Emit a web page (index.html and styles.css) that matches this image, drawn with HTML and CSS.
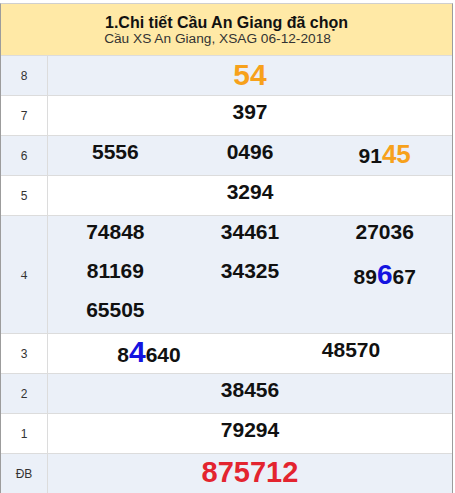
FILE: index.html
```html
<!DOCTYPE html>
<html lang="vi">
<head>
<meta charset="utf-8">
<title>Chi tiết Cầu An Giang</title>
<link rel="stylesheet" href="styles.css">
</head>
<body>
<div class="frame">
  <div class="head">
    <div class="title">1.Chi tiết Cầu An Giang đã chọn</div>
    <div class="sub">Cầu XS An Giang, XSAG 06-12-2018</div>
  </div>

  <div class="row alt">
    <div class="label">8</div>
    <div class="data cols1"><div class="col"><div class="num"><span class="orange big54">54</span></div></div></div>
  </div>

  <div class="row">
    <div class="label">7</div>
    <div class="data cols1"><div class="col"><div class="num">397</div></div></div>
  </div>

  <div class="row alt">
    <div class="label">6</div>
    <div class="data cols3">
      <div class="col"><div class="num">5556</div></div>
      <div class="col"><div class="num">0496</div></div>
      <div class="col"><div class="num">91<span class="orange big45">45</span></div></div>
    </div>
  </div>

  <div class="row">
    <div class="label">5</div>
    <div class="data cols1"><div class="col"><div class="num">3294</div></div></div>
  </div>

  <div class="row alt">
    <div class="label serif">4</div>
    <div class="data cols3">
      <div class="col">
        <div class="num">74848</div>
        <div class="num">81169</div>
        <div class="num">65505</div>
      </div>
      <div class="col">
        <div class="num">34461</div>
        <div class="num">34325</div>
      </div>
      <div class="col">
        <div class="num">27036</div>
        <div class="num">89<span class="blue big6">6</span>67</div>
      </div>
    </div>
  </div>

  <div class="row">
    <div class="label">3</div>
    <div class="data cols2">
      <div class="col"><div class="num">8<span class="blue big4">4</span>640</div></div>
      <div class="col"><div class="num">48570</div></div>
    </div>
  </div>

  <div class="row alt">
    <div class="label">2</div>
    <div class="data cols1"><div class="col"><div class="num">38456</div></div></div>
  </div>

  <div class="row">
    <div class="label">1</div>
    <div class="data cols1"><div class="col"><div class="num">79294</div></div></div>
  </div>

  <div class="row alt">
    <div class="label">ĐB</div>
    <div class="data cols1"><div class="col"><div class="num"><span class="red bigdb">875712</span></div></div></div>
  </div>
</div>
</body>
</html>
```

FILE: styles.css
```css
html, body {
  margin: 0;
  padding: 0;
  background: #ffffff;
}

body {
  font-family: "Liberation Sans", Arial, sans-serif;
  color: #111;
  padding-top: 3px;
}

.frame {
  width: 451px;
  border-left: 1px solid #9c9c9c;
  border-right: 1px solid #9c9c9c;
  border-top: 1px solid #cfcfcf;
  border-bottom: 1px solid #cfcfcf;
}

.head {
  background: #ffe9a6;
  text-align: center;
  padding: 10px 0 10px;
}

.title {
  font-size: 16px;
  font-weight: bold;
  line-height: 18px;
  color: #111;
}

.sub {
  font-size: 13.7px;
  line-height: 13px;
  color: #333;
  padding-right: 18px;
}

.row {
  display: flex;
  border-top: 1px solid #dcdcdc;
  background: #ffffff;
}

.row.alt {
  background: #ebf0f8;
}

.label {
  width: 46px;
  flex: none;
  border-right: 1px solid #dcdcdc;
  display: flex;
  align-items: center;
  justify-content: center;
  font-size: 12px;
  color: #333;
}

.label.serif {
  font-family: "Liberation Serif", "Times New Roman", serif;
  font-size: 13px;
}

.data {
  flex: 1;
  display: grid;
}

.cols1 { grid-template-columns: 1fr; }
.cols2 { grid-template-columns: 1fr 1fr; }
.cols3 { grid-template-columns: 1fr 1fr 1fr; }

.col {
  display: flex;
  flex-direction: column;
  align-items: center;
}

.num {
  box-sizing: border-box;
  height: 39px;
  padding-top: 4px;
  font-size: 21px;
  font-weight: bold;
  color: #111;
  white-space: nowrap;
}

.orange { color: #f7a11b; }
.blue { color: #1414e0; }
.red { color: #e3242f; }

.big54 { font-size: 30px; line-height: 29px; }
.big45 { font-size: 26px; line-height: 28px; }
.big6 { font-size: 28px; line-height: 32px; }
.big4 { font-size: 30px; line-height: 27px; }
.bigdb { font-size: 29px; line-height: 28px; }
```
